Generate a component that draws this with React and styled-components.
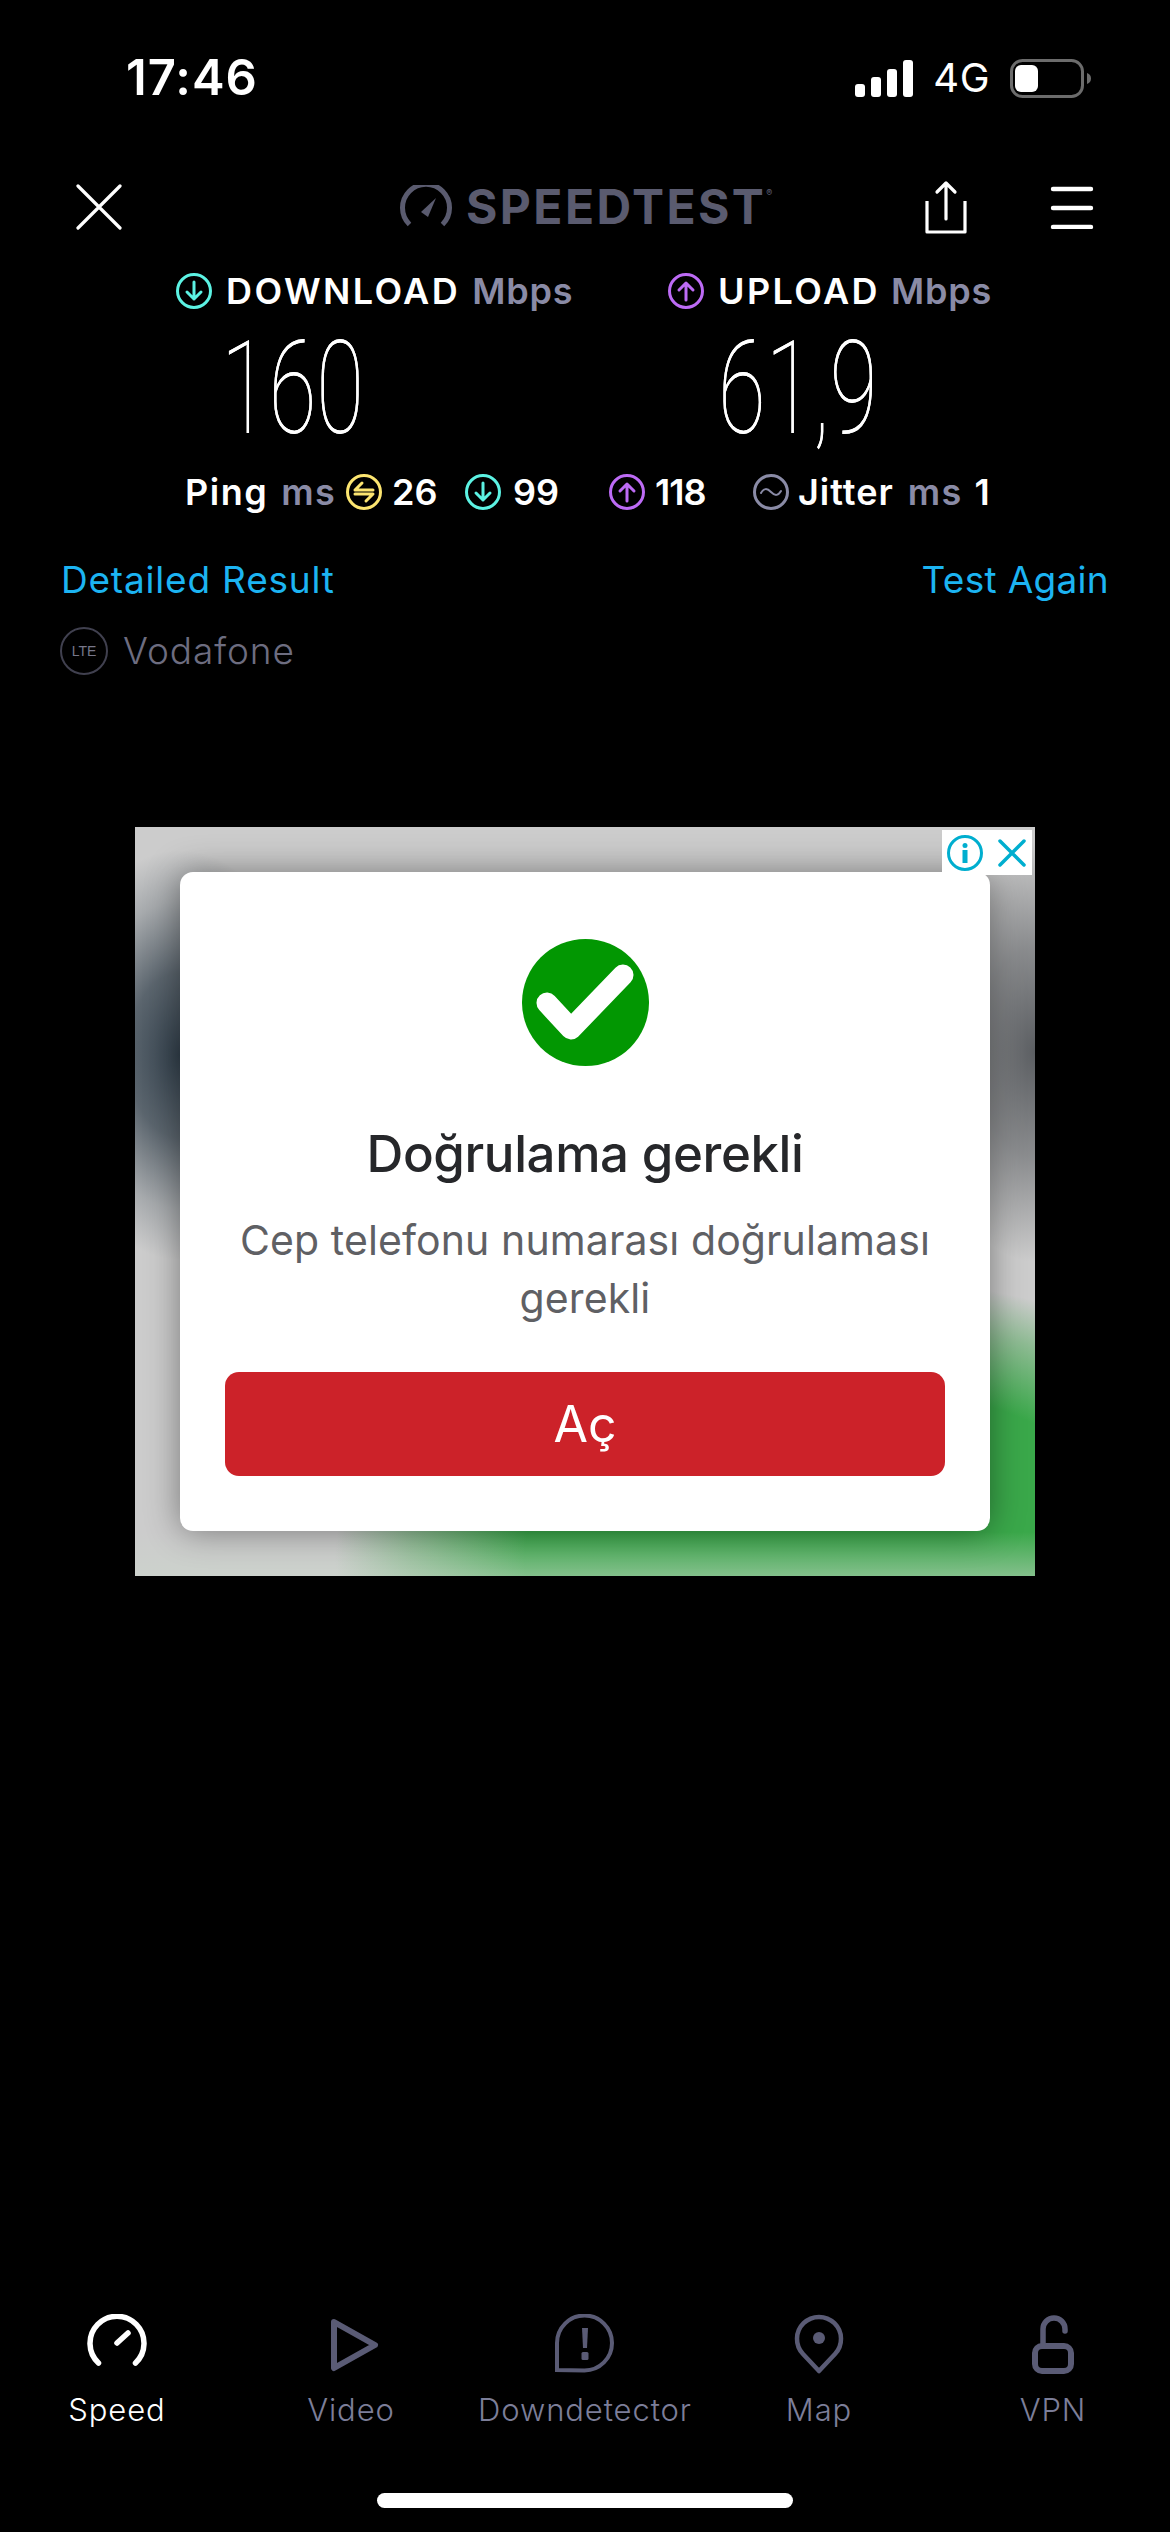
import React from "react";
import styled, { createGlobalStyle } from "styled-components";

const Global = createGlobalStyle`
  html, body { margin: 0; padding: 0; background: #000; }
  * { box-sizing: border-box; }
  body { font-family: Inter, "Liberation Sans", sans-serif; }
`;

const Page = styled.div`
  width: 1170px; height: 2532px; background: #000; color: #fff;
  display: flex; flex-direction: column; overflow: hidden;
`;

const StatusBar = styled.div`
  display: flex; align-items: center; justify-content: space-between;
  height: 40px; margin-top: 58px; padding: 0 79px 0 126px;
`;
const Time = styled.div`
  font-size: 49px; font-weight: 600; line-height: 40px; letter-spacing: 1px;
`;
const StatusRight = styled.div`display: flex; align-items: center;`;
const Network = styled.span`
  font-size: 40px; font-weight: 400; line-height: 40px; margin: 0 20px 0 20px; letter-spacing: .5px;
`;

const Header = styled.header`
  display: grid; grid-template-columns: 324px 525px 125px 1fr;
  align-items: center; height: 54px; margin-top: 82px; padding-left: 76px;
`;
const Logo = styled.div`display: flex; align-items: center; gap: 14px; color: #5a5b6f;`;
const LogoText = styled.span`
  font-size: 48px; font-weight: 700; line-height: 54px; letter-spacing: 2.4px; position: relative;
  sup { position: absolute; font-size: 9px; font-weight: 500; top: 8px; right: -6px; line-height: 10px; letter-spacing: 0; }
`;

const SpeedGrid = styled.div`
  display: grid; grid-template-columns: 492px 1fr; padding-left: 176px;
  margin-top: ${p => p.$top}px;
`;
const MetricLabel = styled.div`display: flex; align-items: center; gap: 14px; height: 36px;`;
const Strong = styled.span`
  font-size: 36px; font-weight: 600; line-height: 36px; letter-spacing: ${p => p.$ls || 0}px;
  white-space: nowrap; color: ${p => p.$muted ? "#8a8ba6" : "#fff"};
  margin-left: ${p => p.$gap || 0}px;
`;
const Value = styled.div`
  margin-left: ${p => p.$left}px; height: 92px; font-family: Roboto, sans-serif; font-weight: 100;
  font-size: 130px; line-height: 92px; white-space: nowrap;
  transform-origin: 0 50%; transform: scaleX(0.67);
  text-shadow: 0 0 0.6px #fff;
`;

const PingRow = styled.div`
  display: grid; grid-template-columns: 280px 144px 144px auto; padding-left: 185px;
  margin-top: 39px; height: 36px;
`;
const Stat = styled.div`display: flex; align-items: center; gap: ${p => p.$gap ?? 10}px;`;

const Links = styled.div`
  display: flex; justify-content: space-between; padding: 0 61px; margin-top: 52px;
`;
const Link = styled.a`
  font-size: 37px; font-weight: 400; line-height: 36px; color: #1cb4f2; letter-spacing: ${p => p.$ls}px;
`;
const Carrier = styled.div`
  display: flex; align-items: center; gap: 15px; margin: 29px 0 0 60px; height: 48px;
`;
const CarrierBadge = styled.div`
  width: 48px; height: 48px; border-radius: 50%; border: 2px solid #40404f;
  display: flex; align-items: center; justify-content: center;
  font: 500 14px "Liberation Sans", sans-serif; color: #77778a;
`;
const CarrierName = styled.span`
  font-size: 37px; font-weight: 300; line-height: 48px; color: #6d6d80; letter-spacing: .9px;
`;

const Ad = styled.section`
  position: relative; width: 900px; height: 749px; margin: 152px 0 0 135px; padding: 45px;
  background:
    linear-gradient(to top, rgba(204,215,204,.5), rgba(204,215,204,0) 44px),
    radial-gradient(ellipse 130px 205px at 45px 228px, rgba(48,62,74,.98) 0%, rgba(48,62,74,.72) 40%, rgba(48,62,74,.24) 75%, rgba(48,62,74,0) 100%),
    radial-gradient(ellipse 110px 210px at 900px 225px, rgba(85,88,92,.95) 0%, rgba(85,88,92,.55) 50%, rgba(85,88,92,0) 100%),
    radial-gradient(ellipse 500px 280px at 700px 730px, #3aa84a 0%, #3aa84a 62%, rgba(80,170,90,.5) 85%, rgba(150,190,155,0) 100%),
    #cccccc;
`;
const AdTag = styled.div`
  position: absolute; top: 3px; right: 3px; width: 90px; height: 45px; background: #fff;
  display: flex; align-items: center; justify-content: center; z-index: 2;
`;
const AdCard = styled.div`
  position: relative; width: 810px; height: 659px; background: #fff; border-radius: 13px;
  box-shadow: 0 0 34px rgba(0,0,0,.42);
  padding: 67px 45px 55px; display: flex; flex-direction: column; align-items: center;
`;
const AdTitle = styled.h2`
  margin: 58px 0 0; font-size: 51px; font-weight: 500; line-height: 60px; color: #26272a;
  letter-spacing: -0.4px;
`;
const AdBody = styled.p`
  margin: 27px 0 0; font-size: 41px; font-weight: 400; line-height: 58px; color: #5f6064;
  text-align: center; letter-spacing: 0.1px;
`;
const AdButton = styled.button`
  margin-top: 45px; width: 720px; height: 104px; border: 0; border-radius: 14px;
  background: #cc2229; color: #fff; font: 400 50px Inter, sans-serif; flex: none;
`;

const Nav = styled.nav`
  display: grid; grid-template-columns: repeat(5, 234px); margin-top: auto;
`;
const NavItem = styled.div`
  display: flex; flex-direction: column; align-items: center;
  color: ${p => p.$active ? "#fff" : "#7c7e99"};
`;
const NavLabel = styled.span`
  margin-top: 16px; font-size: 31px; font-weight: 300; line-height: 36px; letter-spacing: .9px;
`;
const HomeBar = styled.div`
  width: 416px; height: 15px; border-radius: 8px; background: #fff;
  margin: 65px auto 24px;
`;

const Signal = () => (
  <svg width="58" height="37" viewBox="0 0 58 37" fill="#fff">
    <rect x="0" y="24" width="10" height="13" rx="3" />
    <rect x="16" y="17" width="10" height="20" rx="3" />
    <rect x="32" y="9" width="10" height="28" rx="3" />
    <rect x="48" y="0" width="10" height="37" rx="3" />
  </svg>
);
const Battery = () => (
  <svg width="81" height="39" viewBox="0 0 81 39">
    <rect x="1.5" y="1.5" width="71" height="36" rx="11" fill="none" stroke="#6c6c6c" strokeWidth="3" />
    <rect x="5" y="6" width="23" height="27" rx="6" fill="#fff" />
    <path d="M77 14c3 1 4 3 4 5.500s-1 4.500-4 5.500z" fill="#6c6c6c" />
  </svg>
);
const CloseIcon = () => (
  <svg width="46" height="46" viewBox="0 0 46 46" stroke="#fff" strokeWidth="3.200" strokeLinecap="round">
    <path d="M2 2l42 42M44 2L2 44" />
  </svg>
);
const LogoGauge = () => (
  <svg width="52" height="44" viewBox="0 0 52 44" fill="none" stroke="#5a5b6f">
    <path d="M9.500 39.500A23.500 23.500 0 1 1 42.500 39.500" strokeWidth="5" />
    <path d="M21 27l15-14-8 19z" fill="#5a5b6f" stroke="none" />
  </svg>
);
const ShareIcon = () => (
  <svg width="42" height="54" viewBox="0 0 42 54" fill="none" stroke="#fff" strokeWidth="3.200" strokeLinecap="round" strokeLinejoin="round">
    <path d="M21 39V3M12 12l9-9 9 9" />
    <path d="M2 21v31h38V21" strokeLinecap="butt" />
  </svg>
);
const MenuIcon = () => (
  <svg width="44" height="44" viewBox="0 0 44 44" stroke="#fff" strokeWidth="4.400" strokeLinecap="round">
    <path d="M3 4h38M3 23h38M3 42h38" />
  </svg>
);
const Round = ({ color, children }) => (
  <svg width="36" height="36" viewBox="0 0 36 36" fill="none" stroke={color} strokeWidth="3" strokeLinecap="round" strokeLinejoin="round" style={{ flex: "none" }}>
    <circle cx="18" cy="18" r="16.500" />
    {children}
  </svg>
);
const Down = () => <Round color="#5cf2e3"><path d="M18 9v17M11 19l7 7 7-7" /></Round>;
const Up = () => <Round color="#bd6bf5"><path d="M18 27V10M11 17l7-7 7 7" /></Round>;
const PingIcon = () => <Round color="#fce570"><path d="M27 16H9l7-7M9 20h18l-7 7" /></Round>;
const JitterIcon = () => <Round color="#8a8ba6"><path strokeWidth="2" d="M8 19c3-5 6-5 10-1s7 4 10-1" /></Round>;
const InfoIcon = () => (
  <svg width="36" height="36" viewBox="0 0 36 36" fill="none">
    <circle cx="18" cy="18" r="16.500" stroke="#00aecf" strokeWidth="3" />
    <circle cx="18" cy="10.500" r="2.500" fill="#00aecf" />
    <rect x="15.500" y="15" width="5" height="13" fill="#00aecf" />
  </svg>
);
const XIcon = () => (
  <svg width="30" height="30" viewBox="0 0 30 30" stroke="#00aecf" strokeWidth="3.500" strokeLinecap="round" style={{ marginLeft: 14 }}>
    <path d="M3 3l24 24M27 3L3 27" />
  </svg>
);
const CheckBadge = () => (
  <svg width="127" height="127" viewBox="0 0 127 127" style={{ flex: "none" }}>
    <circle cx="63.500" cy="63.500" r="63.500" fill="#029702" />
    <path d="M25 64l24 26 52-54" fill="none" stroke="#fff" strokeWidth="21" strokeLinecap="round" strokeLinejoin="round" />
  </svg>
);

const NavSvg = ({ children, color = "#5a5b75", sw = 5 }) => (
  <svg width="62" height="62" viewBox="0 0 62 62" fill="none" stroke={color} strokeWidth={sw} strokeLinecap="round" strokeLinejoin="round">
    {children}
  </svg>
);
const navItems = [
  { label: "Speed", active: true, icon: <NavSvg color="#fff" sw={5.500}><path d="M12.500 49A27 27 0 1 1 49.500 49" /><path d="M31 29l11-10" /></NavSvg> },
  { label: "Video", icon: <NavSvg sw={6}><path d="M14 8l41 23-41 23z" /></NavSvg> },
  { label: "Downdetector", icon: <NavSvg sw={4}><path strokeLinejoin="miter" d="M3 56V29a27.500 27.500 0 1 1 27.500 27.500z" /><path d="M28 14h6l-1 20h-4z" fill="#5a5b75" stroke="none" /><rect x="27.500" y="38" width="7" height="8" rx="1.500" fill="#5a5b75" stroke="none" /></NavSvg> },
  { label: "Map", icon: <NavSvg sw={4.500}><path d="M31 57L15 40A22 22 0 1 1 47 40z" /><circle cx="31" cy="24" r="6" fill="#5a5b75" stroke="none" /></NavSvg> },
  { label: "VPN", icon: <NavSvg sw={6}><rect x="13" y="32" width="36" height="25" rx="7" /><path strokeWidth="5.500" d="M21 32V15A11 11 0 0 1 43 15v2" /></NavSvg> },
];

export default function App() {
  return (
    <Page>
      <Global />
      <StatusBar>
        <Time>17:46</Time>
        <StatusRight>
          <Signal />
          <Network>4G</Network>
          <Battery />
        </StatusRight>
      </StatusBar>
      <Header>
        <CloseIcon />
        <Logo>
          <LogoGauge />
          <LogoText>SPEEDTEST<sup>®</sup></LogoText>
        </Logo>
        <ShareIcon />
        <MenuIcon />
      </Header>
      <SpeedGrid $top={39}>
        <MetricLabel><Down /><Strong $ls={2.4}>DOWNLOAD</Strong><Strong $muted $gap={-2} $ls={.8}>Mbps</Strong></MetricLabel>
        <MetricLabel><Up /><Strong $ls={2.4}>UPLOAD</Strong><Strong $muted $gap={-3} $ls={.8}>Mbps</Strong></MetricLabel>
      </SpeedGrid>
      <SpeedGrid $top={34}>
        <Value $left={45}>160</Value>
        <Value $left={50}>61,9</Value>
      </SpeedGrid>
      <PingRow>
        <Stat>
          <Strong $ls={1.5}>Ping</Strong><Strong $muted $gap={3} $ls={1.3}>ms</Strong>
          <PingIcon /><Strong>26</Strong>
        </Stat>
        <Stat $gap={12}><Down /><Strong>99</Strong></Stat>
        <Stat><Up /><Strong $ls={-1}>118</Strong></Stat>
        <Stat $gap={9}><JitterIcon /><Strong $ls={1}>Jitter</Strong><Strong $muted $gap={5} $ls={1.3}>ms</Strong><Strong $gap={3}>1</Strong></Stat>
      </PingRow>
      <Links>
        <Link $ls={.8}>Detailed Result</Link>
        <Link $ls={.3}>Test Again</Link>
      </Links>
      <Carrier>
        <CarrierBadge>LTE</CarrierBadge>
        <CarrierName>Vodafone</CarrierName>
      </Carrier>
      <Ad>
        <AdTag><InfoIcon /><XIcon /></AdTag>
        <AdCard>
          <CheckBadge />
          <AdTitle>Doğrulama gerekli</AdTitle>
          <AdBody>Cep telefonu numarası doğrulaması<br />gerekli</AdBody>
          <AdButton>Aç</AdButton>
        </AdCard>
      </Ad>
      <Nav>
        {navItems.map(n => (
          <NavItem key={n.label} $active={n.active}>
            {n.icon}
            <NavLabel>{n.label}</NavLabel>
          </NavItem>
        ))}
      </Nav>
      <HomeBar />
    </Page>
  );
}
